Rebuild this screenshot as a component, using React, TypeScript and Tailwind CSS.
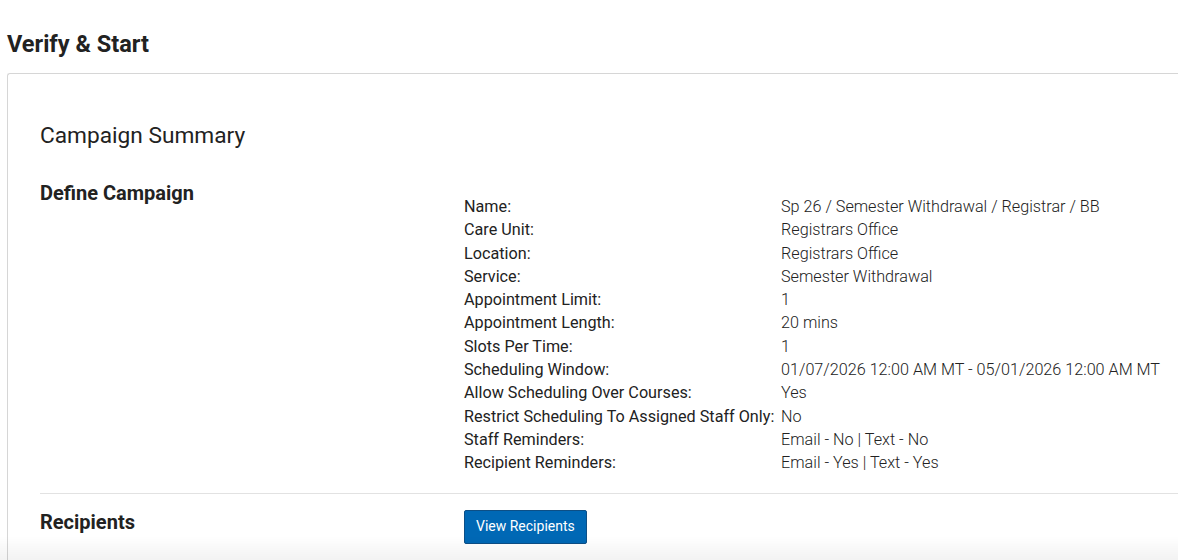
import React from 'react';

const rows: [string, string][] = [
  ['Name:', 'Sp 26 / Semester Withdrawal / Registrar / BB'],
  ['Care Unit:', 'Registrars Office'],
  ['Location:', 'Registrars Office'],
  ['Service:', 'Semester Withdrawal'],
  ['Appointment Limit:', '1'],
  ['Appointment Length:', '20 mins'],
  ['Slots Per Time:', '1'],
  ['Scheduling Window:', '01/07/2026 12:00 AM MT - 05/01/2026 12:00 AM MT'],
  ['Allow Scheduling Over Courses:', 'Yes'],
  ['Restrict Scheduling To Assigned Staff Only:', 'No'],
  ['Staff Reminders:', 'Email - No | Text - No'],
  ['Recipient Reminders:', 'Email - Yes | Text - Yes'],
];

const App = () => {
  return (
    <div
      className="h-[560px] overflow-hidden bg-white pl-[7px] text-[#222]"
      style={{ fontFamily: 'Roboto, "Liberation Sans", sans-serif' }}
    >
      <h1 className="pt-[30px] text-[23.5px] font-bold leading-[29px]">Verify &amp; Start</h1>

      <div className="mt-[14px] rounded-tl-[3px] border-l border-t border-[#d6d6d6] pl-[32px]">
        <h2 className="pt-[47px] text-[22.7px] leading-[30px]">Campaign Summary</h2>

        {/* Define Campaign */}
        <div className="mt-[30px] flex border-b border-[#e2e2e2] pb-[18px]">
          <div className="w-[424px] shrink-0 text-[20px] font-bold leading-[24px]">Define Campaign</div>
          <div className="pt-[14px] text-[16.2px] leading-[23.3px]">
            <div className="grid grid-cols-[317px_auto]">
              {rows.map(([label, value]) => (
                <React.Fragment key={label}>
                  <div className="whitespace-nowrap">{label}</div>
                  <div className="whitespace-nowrap font-light">{value}</div>
                </React.Fragment>
              ))}
            </div>
          </div>
        </div>

        {/* Recipients */}
        <div className="flex items-start border-b border-[#e2e2e2] py-[16px]">
          <div className="w-[424px] shrink-0 text-[20px] font-bold leading-[24px]">Recipients</div>
          <button
            type="button"
            className="h-[34px] rounded-[2px] border border-[#0d4f86] bg-[#0068b5] px-[11px] text-[14px] text-white"
          >
            View Recipients
          </button>
        </div>
      </div>

      <div className="pointer-events-none fixed inset-x-0 bottom-0 h-[24px] bg-linear-to-b from-transparent to-black/[0.05]" />
    </div>
  );
};

export default App;
